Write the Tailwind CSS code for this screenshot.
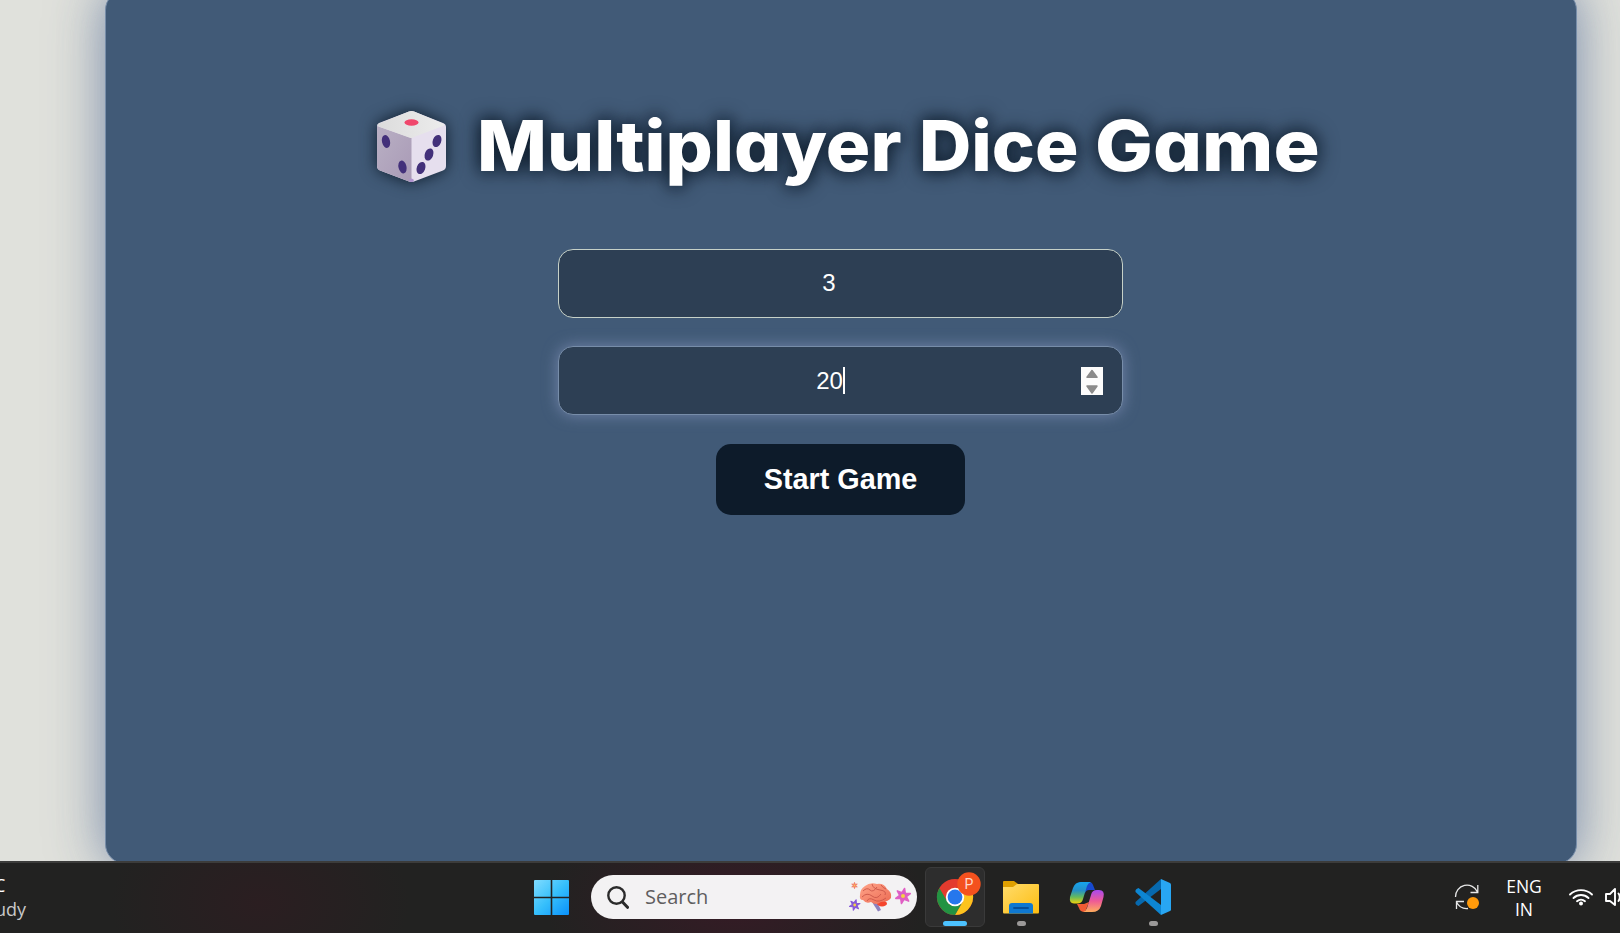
<!DOCTYPE html>
<html lang="en">
<head>
<meta charset="utf-8">
<title>Multiplayer Dice Game</title>
<script src="https://cdn.jsdelivr.net/npm/@tailwindcss/browser@4"></script>
</head>
<body class="w-[1620px] h-[933px] overflow-hidden flex flex-col bg-[#e0e1dc]">
<main class="h-[861px] shrink-0 overflow-hidden">
  <section class="-mt-[10px] ml-[105px] w-[1472px] h-[874px] pr-px rounded-[20px] bg-[#415a77] border border-[#778da9] shadow-[0_0_60px_rgba(65,90,119,0.4),0_0_40px_rgba(119,141,190,0.5)] flex flex-col items-center font-['Liberation_Sans',sans-serif] text-white">
    <h1 class="mt-[105px] w-full h-[100px] pl-[270px] flex items-center font-['Inter',sans-serif] font-extrabold text-[70px] leading-[100px] [font-feature-settings:'cv11'] text-shadow-[0_0_20px_#0d1b2a,0_0_14px_rgba(13,27,42,0.6)] whitespace-nowrap">
      <svg class="w-[71px] h-[73px] mr-[30px] shrink-0 drop-shadow-[0_0_8px_#0d1b2a]" viewBox="0 0 71 73">
        <defs>
          <linearGradient id="dl" x1="0" y1="0" x2="1" y2="1"><stop offset="0" stop-color="#b9b0c4"/><stop offset="1" stop-color="#a99ab6"/></linearGradient>
          <linearGradient id="dt" x1="0" y1="0" x2="1" y2="0"><stop offset="0" stop-color="#dcdcdc"/><stop offset="1" stop-color="#ececec"/></linearGradient>
        </defs>
        <path d="M1 16 Q1 14 3 13 L33 1.500 Q35.500 .7 38 1.500 L67 13 Q70 14 70 17 V56 Q70 59 67 60.500 L38 71.500 Q35.500 72.500 33 71.500 L4 60.500 Q1 59 1 56Z" fill="#e6dfee"/>
        <path d="M1 16 L35.500 28 V72 Q34 72 33 71.500 L4 60.500 Q1 59 1 56Z" fill="url(#dl)"/>
        <path d="M2 14 L33 1.500 Q35.500 .7 38 1.500 L68 14 Q69 15 67 16 L38 27 Q35.500 28.500 33 27.500 L4 17 Q1 15.500 2 14Z" fill="url(#dt)"/>
        <path d="M33 70 Q35.500 67 38 70 L37 72 H34Z" fill="#ae92cd"/>
        <ellipse cx="35.500" cy="12.500" rx="7" ry="3.200" fill="#f0476c"/>
        <g fill="#43307a"><ellipse cx="10" cy="31.500" rx="4" ry="6.500" transform="rotate(-14 10 31.500)"/><ellipse cx="26.500" cy="57" rx="4" ry="6.500" transform="rotate(-14 26.500 57)"/><ellipse cx="61" cy="31" rx="4.200" ry="6.300" transform="rotate(20 61 31)"/><ellipse cx="53" cy="44.500" rx="4.200" ry="6.300" transform="rotate(20 53 44.500)"/><ellipse cx="45" cy="58" rx="4.200" ry="6.300" transform="rotate(20 45 58)"/></g>
      </svg>
      <span class="w-[442px] origin-left scale-x-[1.06]">Multiplayer</span><span class="w-[176px] origin-left scale-x-[1.035]">Dice</span><span class="origin-left scale-x-[1.1]">Game</span>
    </h1>
    <div class="mt-[53px] w-[565px] h-[69px] rounded-[15px] border border-[#c6d1c8] bg-[#2d3f54] flex items-center justify-center pr-[23px] pb-[2px] text-2xl">3</div>
    <div class="mt-[28px] w-[565px] h-[69px] rounded-[15px] border border-[#778da9] bg-[#2d3f54] shadow-[0_0_15px_rgba(130,145,185,0.75)] flex items-center text-2xl pr-[19px]">
      <div class="flex-1 pl-[19px] flex items-center justify-center"><span>20</span><i class="w-[2px] -mr-[2px] h-[27px] bg-white"></i></div>
      <svg class="w-[22px] h-[28px] bg-[#fcfcfc]" viewBox="0 0 22 28" fill="#8b8b8b" stroke="#8b8b8b" stroke-width="1.500" stroke-linejoin="round"><path d="M11 3.500 L16 10.300 H6Z"/><path d="M11 26 L16 19 H6Z"/></svg>
    </div>
    <div class="mt-[29px] w-[249px] h-[71px] rounded-[15px] bg-[#0d1b2a] flex items-center justify-center font-bold text-[28.8px]">Start Game</div>
  </section>
</main>
<footer class="relative z-10 h-[72px] shrink-0 pb-[2px] border-t-2 border-[#3c3c3b] bg-[radial-gradient(ellipse_190px_110px_at_735px_40px,#351b25,#351b2500),radial-gradient(ellipse_150px_100px_at_260px_40px,#2b1e21,#2b1e2100)] bg-[#222221] flex items-center font-['Open_Sans',sans-serif] text-white">
  <div class="w-[518px] h-full pt-[10px] text-[18px] leading-6 whitespace-nowrap">
    <div class="-ml-[6px]">C</div>
    <div class="-ml-[5px] text-[#c9c9c9]">udy</div>
  </div>
  <div class="w-[73px] pl-[16px]">
    <svg class="w-[35px] h-[35px]" viewBox="0 0 35 35"><defs><linearGradient id="w" gradientUnits="userSpaceOnUse" x1="0" y1="0" x2="35" y2="35"><stop offset="0" stop-color="#80dcff"/><stop offset=".5" stop-color="#36bffb"/><stop offset="1" stop-color="#0a91fb"/></linearGradient></defs><path fill="url(#w)" d="M1 0H16.700V16.700H0V1Q0 0 1 0ZM18.300 0H34Q35 0 35 1V16.700H18.300ZM0 18.300H16.700V35H1Q0 35 0 34ZM18.300 18.300H35V34Q35 35 34 35H18.300Z"/></svg>
  </div>
  <div class="w-[326px] h-[44px] rounded-full bg-[#f3f2f3] flex items-center pl-[16px] pr-[4px] text-[#5f5e5f]">
    <svg class="w-[22px] h-[23px]" viewBox="0 0 22 23" fill="none" stroke="#2b2b2b" stroke-width="2.400" stroke-linecap="round"><circle cx="9.500" cy="9.500" r="8.200"/><path d="M15.500 16 L20.500 21.300" stroke-width="3"/></svg>
    <span class="ml-[16px] text-[20px] flex-1">Search</span>
    <svg class="w-[66px] h-[32px]" viewBox="847 882 66 32">
      <defs><linearGradient id="b" x1="0" y1="0" x2="1" y2="1"><stop offset="0" stop-color="#ffa58a"/><stop offset="1" stop-color="#ec6a52"/></linearGradient>
      <linearGradient id="pk" x1="0" y1="0" x2="1" y2="1"><stop offset="0" stop-color="#b45be0"/><stop offset="1" stop-color="#fb62ad"/></linearGradient>
      <path id="fl" d="M0 -9 L2 -3.500 L7.800 -4.500 L4 0 L7.800 4.500 L2 3.500 L0 9 L-2 3.500 L-7.800 4.500 L-4 0 L-7.800 -4.500 L-2 -3.500Z" stroke-width="1.800" stroke-linejoin="round"/></defs>
      <path d="M872 903 L878 905 L881 911 L878 912.500Z" fill="#8d80bd"/><ellipse cx="882" cy="904.500" rx="5" ry="3" fill="#f5452c"/>
      <path d="M860 896 Q860 890 865 887 Q870 883 877 885 Q884 884 887 890 Q892 893 891 899 Q888 903 881 903 Q876 907 871 903 Q866 905 863 901 Q859 901 860 896Z" fill="url(#b)"/>
      <g fill="none" stroke="#cb5648" stroke-width=".9"><path d="M863 892 Q867 888 870 891 T877 888 M872 885 Q873 890 880 891 T885 896 M862 898 Q867 893 872 897 T881 895 M867 902 Q869 898 874 901 T886 899 M881 886 Q883 889 886 890"/></g>
      <use href="#fl" transform="translate(903 897) scale(.85) rotate(12)" fill="url(#pk)" stroke="#e05fc4"/><circle cx="903" cy="897" r="2" fill="#f4d343"/>
      <use href="#fl" transform="translate(854.700 906) scale(.6) rotate(15)" fill="#8757d8" stroke="#8757d8"/><circle cx="854.700" cy="906" r="1.400" fill="#f4d343"/>
      <use href="#fl" transform="translate(854.500 886.500) scale(.36)" fill="#f17b65" stroke="#f17b65"/><circle cx="854.500" cy="886.500" r=".9" fill="#ffc252"/>
    </svg>
  </div>
  <div class="ml-[8px] w-[60px] h-[60px] rounded-[6px] bg-[#2d2d2d] border border-[#3a3a3a] flex items-center justify-center">
    <svg class="w-[60px] h-[60px] shrink-0" viewBox="925 867 60 60">
      <circle cx="955" cy="897" r="18" fill="#e33b2e"/>
      <path d="M955 888 H970.600 A18 18 0 0 1 955 915 L962.800 901.500Z" fill="#fcc31e"/>
      <path d="M939.400 888 L947.200 901.500 A9 9 0 0 0 962.800 901.500 L955 915 A18 18 0 0 1 939.400 888Z" fill="#229342"/>
      <circle cx="955" cy="897" r="9.200" fill="#fff"/><circle cx="955" cy="897" r="7.400" fill="#2677ed"/>
      <circle cx="969" cy="884" r="11.700" fill="#f4511e"/>
      <text x="969" y="889" text-anchor="middle" font-family="Roboto, sans-serif" font-size="14" fill="#ffd9cb">P</text>
      <rect x="943" y="921" width="24" height="5" rx="2.500" fill="#4cc2ff"/>
    </svg>
  </div>
  <div class="w-[201px] pl-[3px] flex">
    <svg class="w-[66px] h-[60px]" viewBox="988 867 66 60">
      <defs><linearGradient id="f" x1="0" y1="0" x2="1" y2="1"><stop offset="0" stop-color="#ffdc6c"/><stop offset="1" stop-color="#fdbd10"/></linearGradient></defs>
      <path d="M1003 882 Q1003 881 1004 881 H1014 L1018 884 V890 H1003Z" fill="#dfa000"/>
      <path d="M1003 887 H1013 L1017 884 H1038 Q1039 884 1039 885 V912 Q1039 913.500 1038 913.500 H1004 Q1003 913.500 1003 912Z" fill="url(#f)"/>
      <path d="M1009 913.500 V906 Q1009 903 1012 903 H1030 Q1033 903 1033 906 V913.500Z" fill="#0f78d0"/><path d="M1014 908 H1028" stroke="#07509a" stroke-width="1.800" stroke-linecap="round"/>
      <rect x="1017" y="921" width="9" height="5" rx="2.500" fill="#9b9998"/>
    </svg>
    <svg class="w-[66px] h-[60px]" viewBox="1054 867 66 60">
      <defs>
        <linearGradient id="c1" x1="0" y1="0" x2="0" y2="1"><stop offset="0" stop-color="#16a4ee"/><stop offset=".4" stop-color="#2590c6"/><stop offset=".7" stop-color="#65ba5c"/><stop offset="1" stop-color="#f0d10c"/></linearGradient>
        <linearGradient id="c2" x1="0" y1="0" x2="0" y2="1"><stop offset="0" stop-color="#a84af0"/><stop offset=".5" stop-color="#ee5a96"/><stop offset="1" stop-color="#ffad5d"/></linearGradient>
      </defs>
      <path d="M1079 882 H1089 Q1092 882 1093 885 L1095 890 H1089 Q1086 890 1085 893Z" fill="#1749cf"/>
      <path d="M1077 904 H1084 L1089 902 L1085 912 Q1080 912 1079 908Z" fill="#f35b34"/>
      <path d="M1081 882 H1091 Q1088 883 1087 886 L1083 899 Q1082 903.500 1077 903.500 H1074 Q1069 903.500 1070 897 L1073 888 Q1075 882 1081 882Z" fill="url(#c1)"/>
      <path d="M1092 912 H1083 Q1086 911 1087 908 L1091 895 Q1092 890 1097 890 H1099 Q1105 890 1103.500 897 L1101 906 Q1099 912 1092 912Z" fill="url(#c2)"/>
    </svg>
    <svg class="w-[66px] h-[60px]" viewBox="1120 867 66 60">
      <path d="M1161 879 L1135.500 902 Q1135 904 1136.500 905 L1138.500 906 L1161 889Z" fill="#0769ae"/>
      <path d="M1161 915 L1135.500 892 Q1135 890 1136.500 889 L1138.500 888 L1161 905Z" fill="#0d86d2"/>
      <path d="M1161 879 L1170 883 Q1171 883.500 1171 884.500 V909.500 Q1171 910.500 1170 911 L1161 915Z" fill="#28a6f2"/>
      <rect x="1149" y="921" width="9" height="5" rx="2.500" fill="#9b9998"/>
    </svg>
  </div>
  <svg class="ml-[268px] w-[27px] h-[28px]" viewBox="1454 883 27 28" fill="none" stroke="#e8e8e8" stroke-width="1.300"><path d="M1455.500 897 A11.500 11.500 0 0 1 1477.500 892 M1477.800 885 V892.500 H1470.500 M1456.500 909 V901.500 H1464 M1456.500 902 A11.500 11.500 0 0 0 1468 908.500"/><circle cx="1473" cy="903" r="6" fill="#ff9a0b" stroke="none"/></svg>
  <div class="w-[86px] pt-[2px] text-center text-[17.500px] leading-[23px]">ENG<br>IN</div>
  <svg class="w-[53px] h-[28px]" viewBox="1567 883 53 28" fill="none" stroke="#fff" stroke-width="1.900" stroke-linecap="round"><path d="M1570 894.500 A16 16 0 0 1 1592 894.500 M1573.500 898 A11 11 0 0 1 1588.500 898 M1577 901.200 A6 6 0 0 1 1585 901.200"/><circle cx="1581" cy="903.500" r="2" fill="#fff" stroke="none"/><path stroke-linejoin="round" d="M1606 894 H1610 L1615 889 V905 L1610 901 H1606Z M1618.500 893.500 Q1621 897 1618.500 901"/></svg>
</footer>
</body>
</html>
